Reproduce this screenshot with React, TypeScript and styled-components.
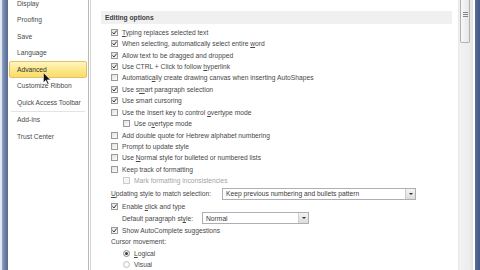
import React from "react";
import styled, { createGlobalStyle } from "styled-components";

const GlobalStyle = createGlobalStyle`
  html, body {
    margin: 0;
    padding: 0;
    background: #ffffff;
  }
  body {
    font-family: "Liberation Sans", Arial, sans-serif;
    color: #474747;
  }
`;

const Window = styled.div`
  position: relative;
  display: flex;
  width: 480px;
  height: 270px;
  overflow: hidden;
  background: #ffffff;
`;

const LeftFrame = styled.div`
  flex: 0 0 8px;
  background: linear-gradient(
    to right,
    #e4e9f0 0,
    #e4e9f0 2px,
    #93a6c4 2px,
    #6a7fa3 5px,
    #566b92 8px
  );
`;

const RightFrame = styled.div`
  flex: 0 0 7px;
  background: linear-gradient(
    to right,
    #ffffff 0,
    #ffffff 2px,
    #5a6f97 2px,
    #435883 7px
  );
`;

const Nav = styled.nav`
  flex: 0 0 80px;
  display: flex;
  flex-direction: column;
  border-right: 1px solid #b8b8b8;
  box-shadow: 1px 0 0 #ffffff, 2px 0 0 #d4d4d4;
  font-size: 6.7px;
  color: #4a4a4a;
`;

const NavList = styled.div`
  display: flex;
  flex-direction: column;
  margin-top: -5px;
`;

const NavItem = styled.div<{ $active?: boolean }>`
  height: 16.5px;
  margin: 0 1px;
  padding-left: 7px;
  display: flex;
  align-items: center;
  box-sizing: border-box;
  border-radius: 2px;
  border: 1px solid ${(p) => (p.$active ? "#e6c35c" : "transparent")};
  background: ${(p) =>
    p.$active
      ? "linear-gradient(to bottom, #fff6c4 0%, #fde98f 45%, #fbdc6a 100%)"
      : "transparent"};
  color: ${(p) => (p.$active ? "#333333" : "#4a4a4a")};
`;

const NavSeparator = styled.div`
  height: 1px;
  margin: 0 3px;
  background: #e3e3e3;
`;

const Content = styled.main`
  flex: 1;
  display: flex;
  flex-direction: column;
  padding: 11px 6px 0 10px;
  margin-left: 2px;
  font-size: 6.7px;
`;

const SectionHeader = styled.div`
  height: 15px;
  display: flex;
  align-items: center;
  padding-left: 4px;
  background: #f0f0f0;
  font-weight: bold;
  color: #3e3e3e;
`;

const Options = styled.div`
  display: flex;
  flex-direction: column;
  margin-top: 2.5px;
  padding-left: 10px;
`;

const Row = styled.div<{ $indent?: number; $h?: number }>`
  height: ${(p) => p.$h ?? 11.45}px;
  display: flex;
  align-items: center;
  gap: 4px;
  padding-left: ${(p) => p.$indent ?? 0}px;
  white-space: nowrap;
`;

const Label = styled.span<{ $disabled?: boolean }>`
  color: ${(p) => (p.$disabled ? "#a4a4a4" : "#474747")};
`;

const Box = styled.span<{ $disabled?: boolean }>`
  width: 7px;
  height: 7px;
  box-sizing: border-box;
  flex: 0 0 7px;
  border: 1px solid ${(p) => (p.$disabled ? "#cccccc" : "#9a9a9a")};
  background: ${(p) =>
    p.$disabled ? "#f5f5f5" : "linear-gradient(135deg, #e2e2e2, #fbfbfb)"};
  display: flex;
  align-items: center;
  justify-content: center;
`;

const Radio = styled.span<{ $on?: boolean }>`
  width: 7px;
  height: 7px;
  flex: 0 0 7px;
  box-sizing: border-box;
  border-radius: 50%;
  border: 1px solid ${(p) => (p.$on ? "#8a8a8a" : "#c4c4c4")};
  background: radial-gradient(circle, #ffffff 30%, #e2e2e2 100%);
  display: flex;
  align-items: center;
  justify-content: center;
  &::after {
    content: "";
    display: ${(p) => (p.$on ? "block" : "none")};
    width: 3px;
    height: 3px;
    border-radius: 50%;
    background: #3a3a3a;
  }
`;

const Select = styled.div<{ $w: number; $gap: number }>`
  width: ${(p) => p.$w}px;
  height: 12px;
  margin-left: ${(p) => p.$gap}px;
  box-sizing: border-box;
  border: 1px solid #adafb5;
  display: flex;
  align-items: center;
  justify-content: space-between;
  padding-left: 3px;
  background: #ffffff;
  color: #3a3a3a;
`;

const SelectButton = styled.span`
  width: 10px;
  height: 10px;
  box-sizing: border-box;
  border-left: 1px solid #cccccc;
  background: linear-gradient(to bottom, #f4f4f4, #dcdcdc);
  display: flex;
  align-items: center;
  justify-content: center;
`;

const Caret = styled.span`
  width: 0;
  height: 0;
  border-left: 2px solid transparent;
  border-right: 2px solid transparent;
  border-top: 2px solid #333333;
`;

const Scrollbar = styled.div`
  flex: 0 0 15px;
  display: flex;
  flex-direction: column;
  background: linear-gradient(
    to right,
    #e6e6e6 0,
    #f2f2f2 2px,
    #ececec 12px,
    #e2e2e2 15px
  );
`;

const Thumb = styled.div`
  height: 43px;
  margin: 0 3px 0 2px;
  box-sizing: border-box;
  border: 1px solid #b0b0b0;
  border-top: none;
  border-radius: 0 0 2px 2px;
  background: linear-gradient(to right, #f8f8f8, #e6e6e6);
  display: flex;
  flex-direction: column;
  align-items: center;
  padding-top: 12px;
  gap: 1px;
`;

const Grip = styled.span`
  width: 5px;
  height: 1px;
  background: #858585;
`;

const Pointer = styled.svg`
  position: absolute;
  left: 43px;
  top: 72px;
`;

const U = styled.u`
  text-decoration: underline;
  text-underline-offset: 1px;
`;

function Check({ on, disabled }: { on?: boolean; disabled?: boolean }) {
  return (
    <Box $disabled={disabled}>
      {on && (
        <svg width="5" height="5" viewBox="0 0 5 5">
          <path d="M0.5 2.4 L2 4 L4.6 0.6" stroke="#333333" strokeWidth="1" fill="none" />
        </svg>
      )}
    </Box>
  );
}

function CheckRow({
  on,
  indent,
  disabled,
  children,
}: {
  on?: boolean;
  indent?: number;
  disabled?: boolean;
  children: React.ReactNode;
}) {
  return (
    <Row $indent={indent}>
      <Check on={on} disabled={disabled} />
      <Label $disabled={disabled}>{children}</Label>
    </Row>
  );
}

const navItems = [
  "Display",
  "Proofing",
  "Save",
  "Language",
  "Advanced",
  "Customize Ribbon",
  "Quick Access Toolbar",
];

export default function App() {
  return (
    <>
      <GlobalStyle />
      <Window>
        <LeftFrame />
        <Nav>
          <NavList>
            {navItems.map((item) => (
              <NavItem key={item} $active={item === "Advanced"}>
                {item}
              </NavItem>
            ))}
            <NavSeparator />
            <NavItem>Add-Ins</NavItem>
            <NavItem>Trust Center</NavItem>
          </NavList>
        </Nav>
        <Content>
          <SectionHeader>Editing options</SectionHeader>
          <Options>
            <CheckRow on>
              <U>T</U>yping replaces selected text
            </CheckRow>
            <CheckRow on>
              When selecting, automatically select entire <U>w</U>ord
            </CheckRow>
            <CheckRow on>Allow text to be dragged and dropped</CheckRow>
            <CheckRow on>
              Use CTRL + Click to follow <U>h</U>yperlink
            </CheckRow>
            <CheckRow>
              Automatic<U>a</U>lly create drawing canvas when inserting AutoShapes
            </CheckRow>
            <CheckRow on>
              Use s<U>m</U>art paragraph selection
            </CheckRow>
            <CheckRow on>Use smart cursoring</CheckRow>
            <CheckRow>
              Use the Insert key to control <U>o</U>vertype mode
            </CheckRow>
            <CheckRow indent={12}>
              Use o<U>v</U>ertype mode
            </CheckRow>
            <CheckRow>Add double quote for Hebrew alphabet numbering</CheckRow>
            <CheckRow>Prompt to update style</CheckRow>
            <CheckRow>
              Use <U>N</U>ormal style for bulleted or numbered lists
            </CheckRow>
            <CheckRow>Keep track of formatting</CheckRow>
            <CheckRow indent={12} disabled>
              Mark formatting inconsistencies
            </CheckRow>
            <Row $h={14}>
              <Label>
                <U>U</U>pdating style to match selection:
              </Label>
              <Select $w={194} $gap={7}>
                <span>Keep previous numbering and bullets pattern</span>
                <SelectButton>
                  <Caret />
                </SelectButton>
              </Select>
            </Row>
            <CheckRow on>
              Enable <U>c</U>lick and type
            </CheckRow>
            <Row $h={13} $indent={11}>
              <Label>Default paragraph st<U>y</U>le:</Label>
              <Select $w={107} $gap={5}>
                <span>Normal</span>
                <SelectButton>
                  <Caret />
                </SelectButton>
              </Select>
            </Row>
            <CheckRow on>Show AutoComplete suggestions</CheckRow>
            <Row $h={11}>
              <Label>Cursor movement:</Label>
            </Row>
            <Row $h={11.3} $indent={12}>
              <Radio $on />
              <Label>
                <U>L</U>ogical
              </Label>
            </Row>
            <Row $h={11.3} $indent={12}>
              <Radio />
              <Label>Visual</Label>
            </Row>
          </Options>
        </Content>
        <Scrollbar>
          <Thumb>
            <Grip />
            <Grip />
            <Grip />
          </Thumb>
        </Scrollbar>
        <RightFrame />
        <Pointer width="8" height="13" viewBox="0 0 12 19">
          <path
            d="M0.5 0.5 L0.5 16 L4.2 12.4 L6.8 18.3 L9 17.4 L6.5 11.6 L11.4 11.6 Z"
            fill="#111111"
            stroke="#ffffff"
            strokeWidth="1"
          />
        </Pointer>
      </Window>
    </>
  );
}
